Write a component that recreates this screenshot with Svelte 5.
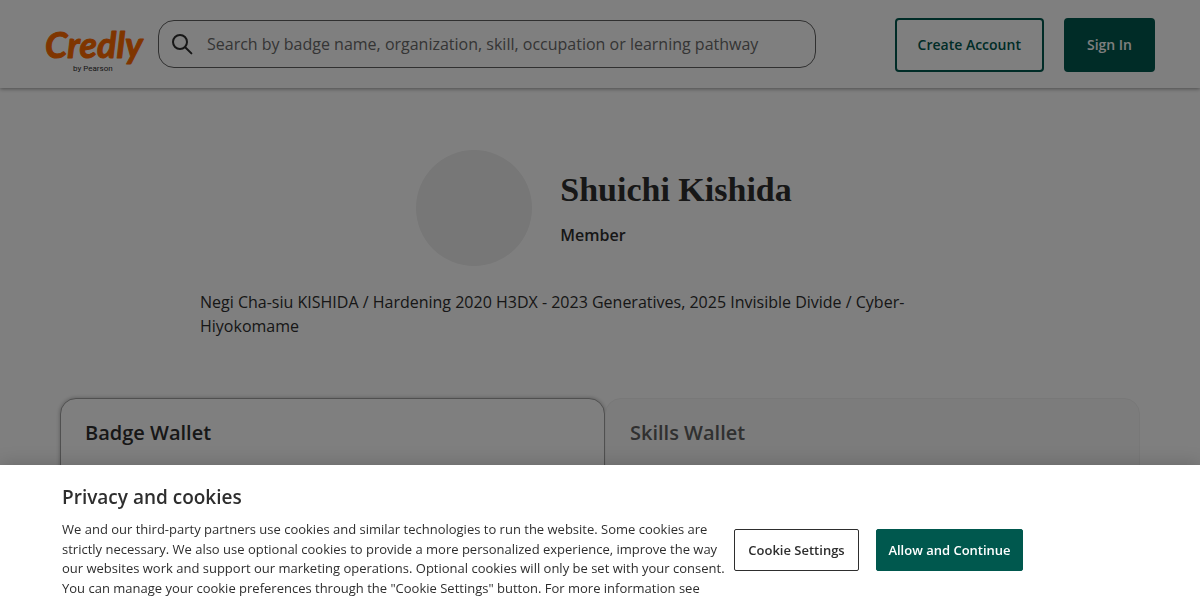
<script>
  const tabs = [
    { label: 'Badge Wallet', active: true },
    { label: 'Skills Wallet', active: false }
  ];
</script>

<div class="page">
  <header>
    <a class="logo" href="/" aria-label="Credly by Pearson">
      <svg viewBox="0 0 100 52" width="100" height="52" aria-hidden="true">
        <text class="word" x="1" y="36">Credly</text>
        <text class="by" x="29" y="49">by Pearson</text>
      </svg>
    </a>
    <label class="search">
      <svg viewBox="0 0 22 22" width="22" height="22" aria-hidden="true">
        <circle cx="9" cy="9" r="7" />
        <path d="M14.2 14.2 20.4 20.4" />
      </svg>
      <input
        type="search"
        aria-label="Search"
        placeholder="Search by badge name, organization, skill, occupation or learning pathway"
      />
    </label>
    <nav>
      <button class="outline" type="button">Create Account</button>
      <button class="solid" type="button">Sign In</button>
    </nav>
  </header>

  <main>
    <section class="profile">
      <div class="person">
        <div class="avatar"></div>
        <div>
          <h1>Shuichi Kishida</h1>
          <p class="role">Member</p>
        </div>
      </div>
      <p class="bio">
        Negi Cha-siu KISHIDA / Hardening 2020 H3DX - 2023 Generatives, 2025 Invisible Divide / Cyber-Hiyokomame
      </p>
    </section>
    <div class="tabs" role="tablist">
      {#each tabs as tab}
        <button type="button" role="tab" class:active={tab.active} aria-selected={tab.active}>{tab.label}</button>
      {/each}
    </div>
  </main>
</div>

<div class="shade"></div>

<section class="cookies" aria-labelledby="cookie-title">
  <div class="policy">
    <h2 id="cookie-title">Privacy and cookies</h2>
    <p>
      We and our third-party partners use cookies and similar technologies to run the website. Some cookies are
      strictly necessary. We also use optional cookies to provide a more personalized experience, improve the way our
      websites work and support our marketing operations. Optional cookies will only be set with your consent. You can
      manage your cookie preferences through the "Cookie Settings" button. For more information see
    </p>
  </div>
  <div class="choices">
    <button class="settings" type="button">Cookie Settings</button>
    <button class="allow" type="button">Allow and Continue</button>
  </div>
</section>

<style>
  :global(body) {
    margin: 0;
    background: #fff;
    color: #2e2e2e;
    font-family: 'Open Sans', sans-serif;
    font-size: 16px;
    line-height: 24px;
  }

  .page {
    height: 100vh;
    overflow: hidden;
  }

  h1, h2, p {
    margin: 0;
  }

  button {
    box-sizing: border-box;
    font-family: inherit;
    font-weight: 600;
    cursor: pointer;
  }

  header {
    display: flex;
    align-items: center;
    box-sizing: border-box;
    height: 88px;
    padding: 0 45px;
    background: #fff;
    box-shadow: 0 1px 4px rgba(0, 0, 0, 0.4);
  }

  .logo {
    display: flex;
    flex: none;
    margin: 8px 14px 0 -1px;
  }

  .logo svg {
    overflow: visible;
  }

  .word {
    font: italic 700 36px Lato, sans-serif;
    fill: #ff6b00;
    stroke: #ff6b00;
    stroke-linejoin: round;
  }

  .by {
    font: 8px Roboto, sans-serif;
    fill: #2e2e2e;
  }

  .search {
    display: flex;
    flex: 1;
    align-items: center;
    gap: 14px;
    box-sizing: border-box;
    max-width: 658px;
    height: 48px;
    padding: 0 12px;
    border: 1px solid #616161;
    border-radius: 16px;
  }

  .search svg {
    flex: none;
    fill: none;
    stroke: #2e2e2e;
    stroke-width: 2;
    stroke-linecap: round;
  }

  .search input {
    flex: 1;
    min-width: 0;
    padding: 0;
    border: 0;
    outline: 0;
    background: none;
    font: inherit;
  }

  .search input::placeholder {
    color: #6a6a6a;
    opacity: 1;
  }

  nav {
    display: flex;
    gap: 20px;
    margin: 2px 0 0 auto;
  }

  nav button {
    height: 54px;
    padding: 0 21px 2px;
    border: 2px solid #00584e;
    border-radius: 4px;
    font-size: 14px;
    white-space: nowrap;
  }

  .outline {
    background: #fff;
    color: #00584e;
  }

  .solid,
  .allow {
    background: #00584e;
    color: #fff;
  }

  main {
    padding: 62px 60px 0;
  }

  .profile {
    max-width: 800px;
    margin: 0 auto;
  }

  .person {
    display: flex;
    align-items: center;
    justify-content: center;
    gap: 28px;
    padding-left: 8px;
  }

  .avatar {
    flex: none;
    width: 116px;
    height: 116px;
    border-radius: 50%;
    background: #eee;
  }

  h1 {
    font-family: 'Liberation Serif', serif;
    font-size: 34px;
    font-weight: 700;
    line-height: 42px;
  }

  .role {
    margin-top: 12px;
    font-weight: 600;
  }

  .bio {
    max-width: 720px;
    margin-top: 24px;
  }

  .tabs {
    display: grid;
    grid-template-columns: 545fr 535fr;
    height: 300px;
    margin-top: 60px;
  }

  .tabs button {
    display: flex;
    align-items: flex-start;
    padding: 20px 24px;
    border: 1px solid #f0f0f0;
    border-radius: 16px 16px 0 0;
    background: #f9f9f9;
    color: #616161;
    font-size: 20px;
    line-height: 28px;
  }

  .tabs .active {
    border-color: #a0a0a0;
    background: #fff;
    color: #2e2e2e;
    box-shadow: 0 0 4px rgba(0, 0, 0, 0.3);
  }

  .shade {
    position: fixed;
    inset: 0;
    background: rgba(0, 0, 0, 0.5);
  }

  .cookies {
    position: fixed;
    right: 0;
    bottom: 0;
    left: 0;
    display: flex;
    align-items: flex-start;
    gap: 4px;
    padding: 20px 62px 2px;
    background: #fff;
    box-shadow: 0 0 18px rgba(0, 0, 0, 0.2);
  }

  .policy {
    flex: 0 1 668px;
  }

  h2 {
    font-size: 19px;
    font-weight: 600;
    line-height: 24px;
  }

  .policy p {
    margin-top: 11px;
    font-size: 13px;
    line-height: 1.5;
  }

  .choices {
    display: flex;
    flex: none;
    gap: 17px;
    margin-top: 44px;
  }

  .choices button {
    height: 42px;
    border: 1px solid #2e2e2e;
    border-radius: 2px;
    font-size: 13px;
    white-space: nowrap;
  }

  .choices .settings {
    width: 125px;
    background: #fff;
    color: #2e2e2e;
  }

  .choices .allow {
    width: 147px;
    border-color: #00584e;
  }
</style>
